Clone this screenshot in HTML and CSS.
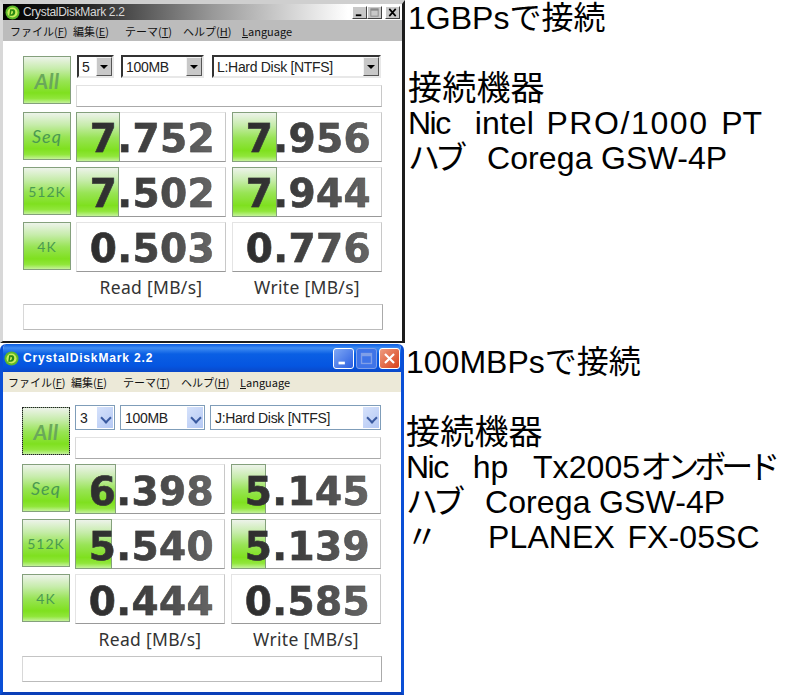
FILE: index.html
```html
<!DOCTYPE html>
<html lang="ja">
<head>
<meta charset="utf-8">
<title>CrystalDiskMark</title>
<link rel="stylesheet" href="styles.css">
</head>
<body>
<main class="sheet">
  <section class="win classic">
    <header class="titlebar">
      <svg class="logo" viewBox="0 0 16 16"><circle cx="8" cy="8" r="7.5" fill="#5cb82a"/><circle cx="8" cy="8" r="5.4" fill="#c9ee5a"/><path d="M5.5 4.5h3.2c3 0 3.4 6.8-1.4 7H4.500z M7 6l-.9 4c2.500 0 3.400-4 1-4z" fill="#2a8a14" fill-rule="evenodd"/></svg>
      <span class="title">CrystalDiskMark 2.2</span>
      <span class="caps">
        <span class="cap"><svg viewBox="0 0 14 12"><rect x="3" y="8" width="6" height="2" fill="#000"/></svg></span>
        <span class="cap"><svg viewBox="0 0 14 12"><rect x="3" y="2" width="8" height="8" fill="none" stroke="#888" stroke-width="1"/><rect x="3" y="2" width="8" height="2" fill="#888"/></svg></span>
        <span class="cap close"><svg viewBox="0 0 14 12"><path d="M3.500 2l7 8M10.500 2l-7 8" stroke="#000" stroke-width="1.800"/></svg></span>
      </span>
    </header>
    <nav class="menu"><span>ファイル(<u>F</u>)</span><span>編集(<u>E</u>)</span><span>テーマ(<u>T</u>)</span><span>ヘルプ(<u>H</u>)</span><span class="lang"><u>L</u>anguage</span></nav>
    <div class="panel">
      <div class="row top">
        <button class="tile all">All</button>
        <div class="controls">
          <div class="combos">
            <div class="combo c-num"><span>5</span><i class="drop"></i></div>
            <div class="combo c-size"><span>100MB</span><i class="drop"></i></div>
            <div class="combo c-drive"><span>L:Hard Disk [NTFS]</span><i class="drop"></i></div>
          </div>
          <div class="field"></div>
        </div>
      </div>
      <div class="row"><button class="tile seq">Seq</button>
        <div class="score"><i class="fill" style="width:44px"></i><b>7.752</b></div>
        <div class="score"><i class="fill" style="width:45px"></i><b>7.956</b></div></div>
      <div class="row"><button class="tile small">512K</button>
        <div class="score"><i class="fill" style="width:43px"></i><b>7.502</b></div>
        <div class="score"><i class="fill" style="width:45px"></i><b>7.944</b></div></div>
      <div class="row"><button class="tile small">4K</button>
        <div class="score"><b>0.503</b></div>
        <div class="score"><b>0.776</b></div></div>
      <div class="units"><span>Read [MB/s]</span><span>Write [MB/s]</span></div>
      <div class="status"></div>
    </div>
  </section>
  <section class="notes first">
    <p>1GBPsで接続</p>
    <p class="gap big">接続機器</p>
    <p class="spaced"><span class="tight">Nic</span>  intel <span class="loose">PRO/1000</span> PT</p>
    <p class="spaced"><span class="kana">ハブ</span>  Corega <span class="snug">GSW-4P</span></p>
  </section>
  <section class="win xp">
    <header class="titlebar">
      <svg class="logo" viewBox="0 0 16 16"><circle cx="8" cy="8" r="7.5" fill="#5cb82a"/><circle cx="8" cy="8" r="5.4" fill="#c9ee5a"/><path d="M5.5 4.5h3.2c3 0 3.4 6.8-1.4 7H4.500z M7 6l-.9 4c2.500 0 3.400-4 1-4z" fill="#2a8a14" fill-rule="evenodd"/></svg>
      <span class="title">CrystalDiskMark 2.2</span>
      <span class="caps">
        <span class="cap"><svg viewBox="0 0 21 21"><rect x="5" y="14" width="7" height="3" fill="#fff"/></svg></span>
        <span class="cap off"><svg viewBox="0 0 21 21"><rect x="5" y="5" width="11" height="11" fill="none" stroke="#7f9fe8" stroke-width="1.500"/><rect x="5" y="5" width="11" height="3" fill="#7f9fe8"/></svg></span>
        <span class="cap close"><svg viewBox="0 0 21 21"><path d="M5.500 5.500l10 10M15.500 5.500l-10 10" stroke="#fff" stroke-width="2.400"/></svg></span>
      </span>
    </header>
    <nav class="menu"><span>ファイル(<u>F</u>)</span><span>編集(<u>E</u>)</span><span>テーマ(<u>T</u>)</span><span>ヘルプ(<u>H</u>)</span><span class="lang"><u>L</u>anguage</span></nav>
    <div class="panel">
      <div class="row top">
        <button class="tile all focus">All</button>
        <div class="controls">
          <div class="combos">
            <div class="combo c-num"><span>3</span><i class="drop"></i></div>
            <div class="combo c-size"><span>100MB</span><i class="drop"></i></div>
            <div class="combo c-drive"><span>J:Hard Disk [NTFS]</span><i class="drop"></i></div>
          </div>
          <div class="field"></div>
        </div>
      </div>
      <div class="row"><button class="tile seq">Seq</button>
        <div class="score"><i class="fill" style="width:41px"></i><b>6.398</b></div>
        <div class="score"><i class="fill" style="width:35px"></i><b>5.145</b></div></div>
      <div class="row"><button class="tile small">512K</button>
        <div class="score"><i class="fill" style="width:37px"></i><b>5.540</b></div>
        <div class="score"><i class="fill" style="width:35px"></i><b>5.139</b></div></div>
      <div class="row"><button class="tile small">4K</button>
        <div class="score"><b>0.444</b></div>
        <div class="score"><b>0.585</b></div></div>
      <div class="units"><span>Read [MB/s]</span><span>Write [MB/s]</span></div>
      <div class="status"></div>
    </div>
  </section>
  <section class="notes second">
    <p>100MBPsで接続</p>
    <p class="gap big">接続機器</p>
    <p class="spaced"><span class="tight">Nic</span>  hp  Tx2005<span class="kana">オンボード</span></p>
    <p class="spaced"><span class="kana">ハブ</span>  Corega <span class="snug">GSW-4P</span></p>
    <p class="spaced">〃    PLANEX FX-05SC</p>
  </section>
</main>
</body>
</html>
```
FILE: styles.css
```css
* { box-sizing: border-box; }
html, body { margin: 0; padding: 0; background: #fff; }
body { width: 800px; height: 696px; overflow: hidden; }
.sheet {
  display: grid;
  grid-template-columns: 405px 395px;
  grid-template-rows: 344px 352px;
  font-family: "Liberation Sans", "Noto Sans CJK JP", sans-serif;
}

/* window shell */
.win { display: flex; flex-direction: column; background: #fff; overflow: hidden; }
.classic {
  height: 343px;
  border-top: 4px solid #cfcfcf;
  border-left: 3px solid #d8d8d8;
  border-right: 3px solid #1c1c1c;
  border-bottom: 2px solid #1c1c1c;
}
.xp {
  width: 404px;
  height: 351px;
  border-left: 3px solid #0a4fd6;
  border-right: 3px solid #0a4fd6;
  border-bottom: 3px solid #0a3fb8;
  border-radius: 6px 6px 0 0;
}

/* title bar */
.titlebar { display: flex; align-items: center; flex: none; }
.classic .titlebar {
  height: 16px;
  padding-left: 2px;
  background: linear-gradient(90deg, #000 0, #222 80px, #999 210px, #fff 345px);
}
.xp .titlebar {
  height: 28px;
  padding-left: 1px;
  background: linear-gradient(180deg, #0a5be0 0, #3f8cf3 4px, #0a5fe4 10px, #0555e0 22px, #0a48c8 100%);
}
.logo { width: 15px; height: 15px; flex: none; }
.title { flex: 1; margin-left: 3px; white-space: nowrap; }
.classic .title { font-size: 12px; color: #d8d8d8; letter-spacing: -.3px; }
.xp .title { margin-left: 4px; font-size: 12px; font-weight: 700; color: #fff; letter-spacing: .85px; }
.caps { display: flex; flex: none; }
.cap { display: block; }
.cap svg { display: block; width: 100%; height: 100%; }
.classic .caps { padding-right: 2px; }
.classic .cap {
  width: 15px;
  height: 13px;
  background: #c8c8c8;
  border: 1px solid;
  border-color: #fff #444 #444 #fff;
}
.classic .cap.close { margin-left: 3px; }
.xp .caps { gap: 2px; padding-right: 1px; }
.xp .cap {
  width: 21px;
  height: 21px;
  border: 1px solid #fff;
  border-radius: 3px;
  background: linear-gradient(135deg, #7fa8f5, #2a5ee0);
}
.xp .cap.off { background: #3f74e8; border-color: #7f9fe8; }
.xp .cap.close { background: linear-gradient(135deg, #ee9c80, #d8401a); }

/* menu */
.menu {
  display: flex;
  flex: none;
  align-items: center;
  height: 21px;
  font-family: "Noto Sans CJK JP", sans-serif;
  font-size: 11px;
  color: #111;
  white-space: nowrap;
}
.menu span { display: block; }
.menu span:nth-child(1) { width: 63px; }
.menu span:nth-child(2) { width: 52px; }
.menu span:nth-child(3) { width: 58px; }
.menu span:nth-child(4) { width: 59px; }
.classic .menu { background: #bcbcbc; padding-left: 7px; }
.xp .menu { height: 20px; background: #ece9d8; padding-left: 5px; }

/* panel */
.panel { display: flex; flex-direction: column; gap: 5px; padding-top: 14px; }
.classic .panel { padding-left: 20px; }
.xp .panel { padding-left: 19px; }
.row { display: flex; gap: 5px; }
.controls { display: flex; flex-direction: column; gap: 7px; }
.combos { display: flex; }

/* tile buttons */
.tile {
  display: block;
  flex: none;
  width: 48px;
  height: 48px;
  padding: 0;
  border: 1px solid #84a07c;
  background: linear-gradient(180deg, #edf3ea 0, #c6ecaa 26%, #98e455 52%, #7fe01f 78%, #90e63a 90%, #c4f29a 100%);
  color: #4a9a50;
  font-family: Lato, sans-serif;
}
.all { margin-top: 1px; font-size: 21px; font-weight: 700; font-style: italic; color: #6aa85a; letter-spacing: .5px; }
.seq { font-size: 18px; font-weight: 400; font-style: italic; letter-spacing: 1px; }
.small { font-size: 14px; font-weight: 400; letter-spacing: 1px; }
.focus { outline: 1px dotted #222; outline-offset: -1px; }

/* combos */
.combo {
  display: flex;
  align-items: center;
  justify-content: space-between;
  background: #fff;
  font-size: 14px;
  letter-spacing: -.3px;
  color: #222;
  white-space: nowrap;
}
.classic .combo {
  height: 23px;
  padding-left: 3px;
  border: 2px solid;
  border-color: #333 #e8e8e8 #e8e8e8 #333;
}
.xp .combo {
  height: 25px;
  padding-left: 4px;
  border: 1px solid #7f9db9;
  margin-top: -1px;
}
.classic .c-num { width: 37px; margin: 0 7px 0 1px; }
.classic .c-size { width: 83px; margin-right: 8px; }
.classic .c-drive { width: 169px; }
.xp .c-num { width: 40px; margin-right: 5px; }
.xp .c-size { width: 85px; margin-right: 5px; }
.xp .c-drive { width: 171px; }
.drop { display: block; flex: none; width: 16px; align-self: stretch; position: relative; }
.classic .drop { background: #c8c8c8; border: 1px solid; border-color: #f4f4f4 #555 #555 #f4f4f4; }
.classic .drop::after {
  content: "";
  position: absolute;
  left: 3px;
  top: 7px;
  border: 4px solid transparent;
  border-top: 4px solid #000;
  border-bottom: 0;
}
.xp .drop { background: linear-gradient(135deg, #d6e2fb, #b4c8f4); margin: 1px; }
.xp .drop::after {
  content: "";
  position: absolute;
  left: 5px;
  top: 7px;
  width: 6px;
  height: 6px;
  border-right: 2px solid #3a5aa0;
  border-bottom: 2px solid #3a5aa0;
  transform: rotate(45deg);
}
.field {
  width: 306px;
  height: 22px;
  border: 1px solid;
  border-color: #e2e2e2 #c8c8c8 #aaa #d8d8d8;
  background: #fff;
}

/* score cells */
.score {
  position: relative;
  display: flex;
  align-items: center;
  justify-content: flex-end;
  width: 150px;
  height: 50px;
  padding: 2px 10px 0 0;
  border: 1px solid;
  border-color: #e4e4e4 #c8c8c8 #999 #e4e4e4;
  background: #fff;
}
.xp .score { padding-top: 4px; }
.score + .score { margin-left: 1px; }
.fill {
  position: absolute;
  left: -1px;
  top: -1px;
  bottom: -1px;
  border: 1px solid #84a07c;
  background: linear-gradient(180deg, #edf3ea 0, #c6ecaa 26%, #98e455 52%, #7fe01f 78%, #90e63a 90%, #c4f29a 100%);
}
.score b {
  position: relative;
  font-family: "DejaVu Sans", sans-serif;
  font-size: 39px;
  font-weight: 700;
  line-height: 1;
  letter-spacing: .4px;
  background: linear-gradient(90deg, #2c2c2c 0, #3a3a3a 35%, #666 100%);
  -webkit-background-clip: text;
  background-clip: text;
  color: transparent;
  -webkit-text-stroke: .5px rgba(60, 60, 60, .7);
}

/* units + status */
.units { display: flex; height: 29px; margin-top: -5px; padding: 0 0 0 50px; align-items: center; font-family: "Noto Sans", sans-serif; font-size: 17.500px; color: #333; }
.units span { display: block; width: 156px; text-align: center; letter-spacing: .3px; }
.status {
  width: 360px;
  height: 26px;
  margin-top: -2px;
  border: 1px solid;
  border-color: #c4c4c4 #aaa #bbb #d8d8d8;
  background: #fff;
}

/* notes */
.notes { color: #000; font-size: 32px; }
.notes p { margin: 0; height: 35px; line-height: 35px; white-space: pre; }
.notes .gap { margin-top: 35px; }
.big { font-size: 34px; letter-spacing: .2px; }
.spaced { word-spacing: 3.5px; letter-spacing: .1px; }
.tight { letter-spacing: -1.5px; }
.loose { letter-spacing: 1.600px; }
.kana { letter-spacing: -5px; }
.snug { margin-left: -4px; }
.first { padding: 1px 0 0 3px; }
.second { padding: 1px 0 0 1px; }
```
